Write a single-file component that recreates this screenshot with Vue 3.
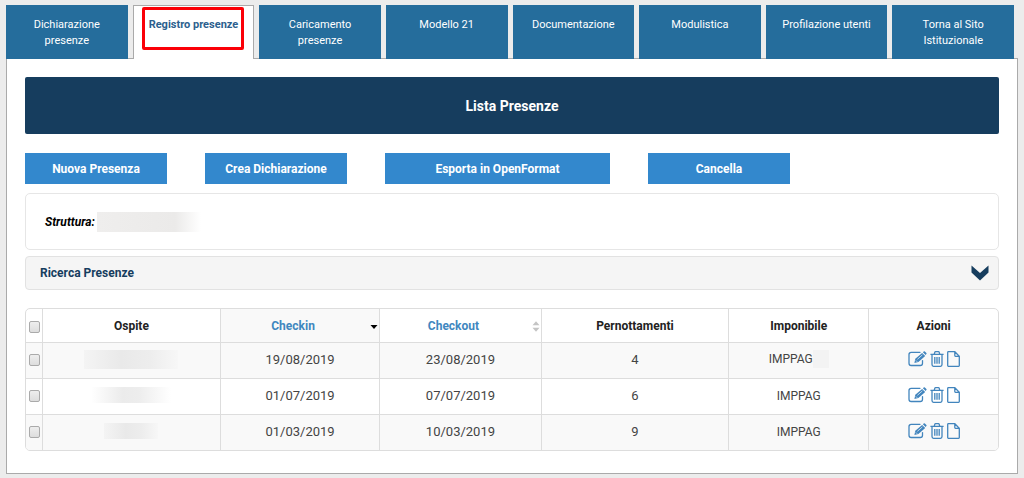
<script setup>
import { ref } from 'vue'

const tabs = [
  'Dichiarazione presenze',
  'Registro presenze',
  'Caricamento presenze',
  'Modello 21',
  'Documentazione',
  'Modulistica',
  'Profilazione utenti',
  'Torna al Sito Istituzionale'
]
const active = ref(1)

const rows = [
  { size: 'long', checkin: '19/08/2019', checkout: '23/08/2019', nights: 4, masked: true },
  { size: 'mid', checkin: '01/07/2019', checkout: '07/07/2019', nights: 6, masked: false },
  { size: 'short', checkin: '01/03/2019', checkout: '10/03/2019', nights: 9, masked: false }
]
</script>

<template>
  <div class="page">
    <nav class="tabs">
      <a
        v-for="(tab, i) in tabs"
        :key="tab"
        href="#"
        class="tab"
        :class="{ active: i === active }"
        @click.prevent="active = i"
      ><span class="label">{{ tab }}</span><span v-if="i === 1" class="highlight"></span></a>
    </nav>

    <main class="panel">
      <h1 class="banner">Lista Presenze</h1>

      <div class="actions">
        <button type="button" class="btn">Nuova Presenza</button>
        <button type="button" class="btn">Crea Dichiarazione</button>
        <button type="button" class="btn wide">Esporta in OpenFormat</button>
        <button type="button" class="btn">Cancella</button>
      </div>

      <section class="facility">
        <span class="facility-label">Struttura:</span>
        <span class="mask facility-mask"></span>
      </section>

      <button type="button" class="search">
        <span>Ricerca Presenze</span>
        <svg class="chevron" viewBox="0 0 18 16" aria-hidden="true">
          <path d="M0.5 0.5 L9 8 L17.5 0.5 V7.5 L9 15.5 L0.5 7.5 Z" fill="#163d5e" />
        </svg>
      </button>

      <div class="table-box">
        <table>
          <colgroup>
            <col class="c-check" /><col class="c-guest" /><col class="c-in" /><col class="c-out" />
            <col class="c-nights" /><col class="c-tax" /><col class="c-act" />
          </colgroup>
          <thead>
            <tr>
              <th class="check"><input type="checkbox" aria-label="Seleziona tutti" /></th>
              <th>Ospite</th>
              <th class="sorted">
                <div class="sort">
                  <a href="#" @click.prevent>Checkin</a>
                  <svg class="arrow" viewBox="0 0 8 12" aria-hidden="true"><path d="M0.5 5h7L4 9z" fill="#000" /></svg>
                </div>
              </th>
              <th>
                <div class="sort">
                  <a href="#" @click.prevent>Checkout</a>
                  <svg class="arrow" viewBox="0 0 8 12" aria-hidden="true"><path d="M.5 5.3h7L4 1.3zM.5 7.7h7L4 11.7z" fill="#c4c4c4" /></svg>
                </div>
              </th>
              <th>Pernottamenti</th>
              <th>Imponibile</th>
              <th>Azioni</th>
            </tr>
          </thead>
          <tbody>
            <tr v-for="row in rows" :key="row.checkin">
              <td class="check"><input type="checkbox" :aria-label="'Seleziona ' + row.checkin" /></td>
              <td><span class="mask" :class="row.size"></span></td>
              <td>{{ row.checkin }}</td>
              <td>{{ row.checkout }}</td>
              <td>{{ row.nights }}</td>
              <td><span class="tax">IMPPAG<span v-if="row.masked" class="mask tiny"></span></span></td>
              <td>
                <div class="icons">
                  <a href="#" aria-label="Modifica" @click.prevent>
                    <svg class="edit" viewBox="0 0 19 16" aria-hidden="true">
                      <path d="M12 1.3H3.2Q1 1.3 1 3.5v8.8q0 2.2 2.2 2.2h9.1q2.2 0 2.2-2.2V9.6" fill="none" stroke="#4285bd" stroke-width="1.3" stroke-linecap="round" />
                      <path d="M6.4 12l.9-4.2 6.8-5.9 3.1 3-6.8 6.1z" fill="#4285bd" />
                      <path d="M14.9 1.2l.8-.7q.6-.5 1.2 0l1.5 1.5q.5.6 0 1.1l-.8.8z" fill="#4285bd" />
                      <path d="M9.4 8.3l5-4.4M7.8 9.4l1.4 1.4" stroke="#e6f0f8" stroke-width=".8" />
                    </svg>
                  </a>
                  <a href="#" aria-label="Elimina" @click.prevent>
                    <svg class="trash" viewBox="0 0 14 16" aria-hidden="true">
                      <path d="M.4 3.4h13.2M4.2 3.2l.7-2.1q.2-.4.6-.4h3q.4 0 .6.4l.7 2.1M2 3.6v9.9q0 1.8 1.5 1.8h7q1.5 0 1.5-1.8V3.6M4.8 6v6.7M7 6v6.7M9.2 6v6.7" fill="none" stroke="#4285bd" stroke-width="1.3" />
                    </svg>
                  </a>
                  <a href="#" aria-label="Documento" @click.prevent>
                    <svg class="file" viewBox="0 0 13 16" aria-hidden="true">
                      <path d="M1.4.7h6.4l4.5 4.5v9.4q0 .7-.7.7H1.4q-.7 0-.7-.7V1.4q0-.7.7-.7zM7.8.9v3.7q0 .7.7.7h3.6" fill="none" stroke="#4285bd" stroke-width="1.3" />
                    </svg>
                  </a>
                </div>
              </td>
            </tr>
          </tbody>
        </table>
      </div>
    </main>
  </div>
</template>

<style>
body {
  background: #ececec;
}
</style>

<style scoped>
* {
  box-sizing: border-box;
}
.page {
  padding: 5px 6px 4px;
  font-family: Roboto, "Open Sans", sans-serif;
  font-size: 13px;
  color: #444;
}
a {
  text-decoration: none;
}
.tabs {
  display: grid;
  grid-template-columns: repeat(8, 1fr);
  gap: 5px;
  padding-right: 4px;
}
.tab {
  position: relative;
  z-index: 1;
  height: 54px;
  margin-bottom: -1px;
  padding: 12px 16px 0;
  background: #256d9c;
  color: #fff;
  font-size: 11px;
  line-height: 16px;
  text-align: center;
}
.tab.active {
  padding: 11px 10px 0;
  background: #fff;
  border: 1px solid #aaa;
  border-bottom: 0;
  color: #2c5f8e;
  font-weight: 700;
}
.tab:nth-child(7) {
  padding: 12px 8px 0;
}
.label {
  display: block;
}
.highlight {
  position: absolute;
  inset: 1px 9px 9px 8px;
  border: 3px solid #fb0007;
  border-radius: 2px;
}
.panel {
  padding: 18px 18px 22px;
  background: #fff;
  border: 1px solid #aaa;
}
.banner {
  margin: 0 0 19px;
  padding-top: 2px;
  background: #163d5e;
  border-radius: 2px;
  color: #fff;
  font-size: 14px;
  font-weight: 700;
  line-height: 55px;
  text-align: center;
}
.actions {
  display: flex;
  flex-wrap: wrap;
  gap: 9px 38px;
  margin-bottom: 9px;
}
.btn {
  width: 142px;
  height: 31px;
  padding: 0;
  background: #3388cd;
  border: 0;
  color: #fff;
  font: 700 12px Roboto, "Open Sans", sans-serif;
}
.btn.wide {
  width: 225px;
}
.facility {
  display: flex;
  align-items: center;
  gap: 2px;
  height: 57px;
  margin-bottom: 6px;
  padding: 0 19px;
  border: 1px solid #e6e6e6;
  border-radius: 5px;
}
.facility-label {
  color: #000;
  font-size: 12px;
  font-weight: 700;
  font-style: italic;
}
.mask {
  display: inline-block;
  vertical-align: middle;
  background: linear-gradient(90deg, #f4f4f4, #e9e9e9 40%, #ededed 70%, #f7f7f7);
}
.facility-mask {
  width: 104px;
  height: 20px;
  background: linear-gradient(90deg, #efeeed, #ebeae9 75%, #fff);
}
.mask.long {
  width: 94px;
  height: 19px;
}
.mask.mid {
  width: 80px;
  height: 16px;
  background: linear-gradient(90deg, #fff, #ebebeb 40%, #ededed 60%, #fff);
}
.mask.short {
  width: 54px;
  height: 16px;
}
.mask.tiny {
  width: 16px;
  height: 18px;
  background: #f3f3f3;
}
.search {
  display: flex;
  align-items: center;
  justify-content: space-between;
  width: 100%;
  height: 34px;
  margin-bottom: 18px;
  padding: 0 9px 0 14px;
  background: #f5f5f5;
  border: 1px solid #e2e2e2;
  border-radius: 4px;
  color: #163d5e;
  font: 700 12px Roboto, "Open Sans", sans-serif;
}
.chevron {
  width: 18px;
  height: 16px;
}
.table-box {
  border: 1px solid #ddd;
  border-radius: 5px;
  overflow: hidden;
}
table {
  width: 100%;
  table-layout: fixed;
  border-collapse: separate;
  border-spacing: 0;
}
.c-check {
  width: 17px;
}
.c-guest {
  width: 18.3%;
}
.c-in {
  width: 16.4%;
}
.c-out {
  width: 16.6%;
}
.c-nights {
  width: 19.3%;
}
.c-tax {
  width: 14.4%;
}
th,
td {
  height: 36px;
  padding: 0;
  border-right: 1px solid #ddd;
  border-bottom: 1px solid #ddd;
  text-align: center;
  vertical-align: middle;
}
td {
  padding-bottom: 3px;
}
th {
  height: 34px;
  color: #222;
  font-size: 12px;
  font-weight: 700;
}
th:last-child,
td:last-child {
  border-right: 0;
}
tbody tr:last-child td {
  height: 35px;
  border-bottom: 0;
}
tbody tr:nth-child(odd),
.sorted {
  background: #f9f9f9;
}
.sort {
  display: flex;
  align-items: center;
  gap: 5px;
  padding-right: 1px;
}
.sort a {
  flex: 1;
  color: #3f87bf;
}
.sort .arrow {
  width: 8px;
  height: 12px;
}
.check input {
  appearance: none;
  display: block;
  width: 11px;
  height: 12px;
  margin: 2px auto 0;
  background: linear-gradient(#eee, #ddd);
  border: 1px solid #aaa;
  border-radius: 2px;
}
.check input:checked {
  background: #3388cd;
}
.tax {
  display: inline-flex;
  align-items: center;
  font-size: 12px;
}
.icons {
  display: flex;
  justify-content: center;
  gap: 3px;
}
.icons a {
  display: block;
}
.icons svg {
  display: block;
  height: 16px;
}
.edit {
  width: 19px;
}
.trash {
  width: 14px;
}
.file {
  width: 13px;
}
</style>
